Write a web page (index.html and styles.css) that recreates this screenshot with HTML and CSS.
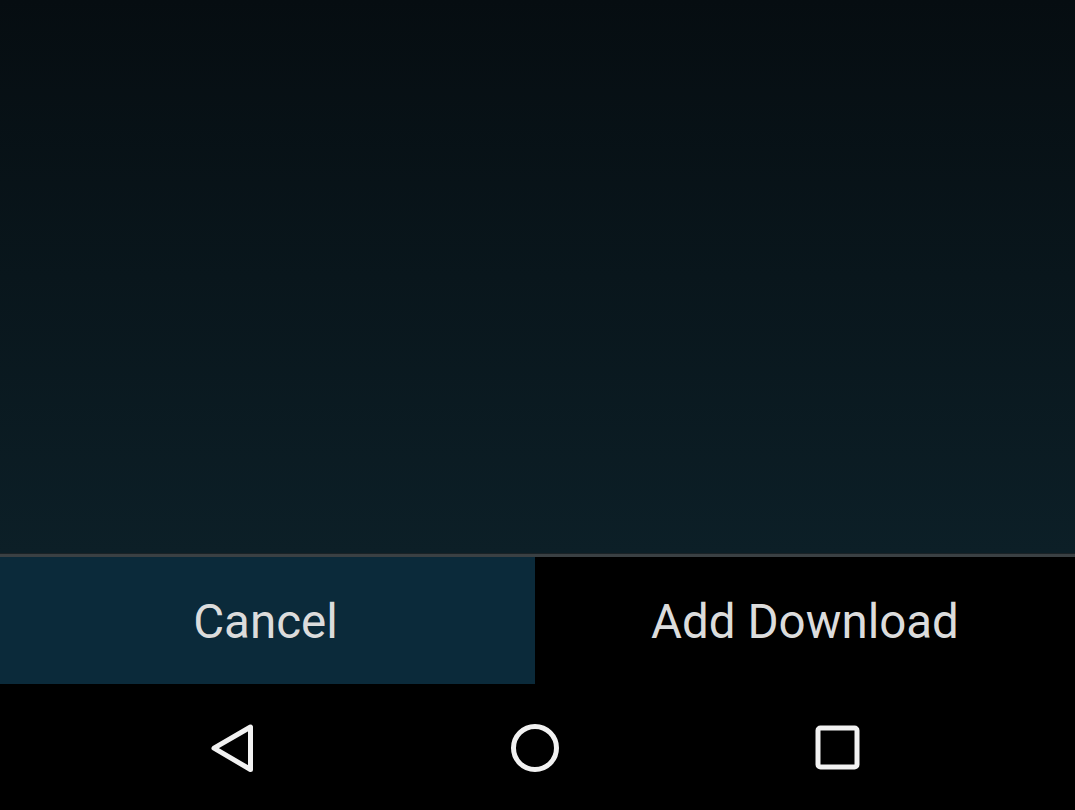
FILE: index.html
```html
<!DOCTYPE html>
<html>
<head>
<meta charset="utf-8">
<link rel="stylesheet" href="styles.css">
</head>
<body>
<div class="screen">
  <div class="content"></div>
  <div class="divider"></div>
  <div class="actions">
    <div class="btn cancel">Cancel</div>
    <div class="btn add">Add Download</div>
  </div>
  <div class="navbar">
    <div class="nav-item">
      <svg width="60" height="60" viewBox="0 0 60 60"><path d="M48.5 9 L48.5 51.5 L12 30.2 Z" fill="none" stroke="#f2f2f2" stroke-width="5" stroke-linejoin="round"/></svg>
    </div>
    <div class="nav-item">
      <svg width="60" height="60" viewBox="0 0 60 60"><circle cx="30" cy="30" r="21.5" fill="none" stroke="#f2f2f2" stroke-width="5"/></svg>
    </div>
    <div class="nav-item">
      <svg width="60" height="60" viewBox="0 0 60 60"><rect x="10" y="10" width="39" height="39" rx="2.5" fill="none" stroke="#f2f2f2" stroke-width="5"/></svg>
    </div>
  </div>
</div>
</body>
</html>
```

FILE: styles.css
```css
html, body {
  margin: 0;
  padding: 0;
  background: #000;
}
.screen {
  width: 1075px;
  height: 810px;
  display: flex;
  flex-direction: column;
  font-family: Roboto, "Noto Sans", sans-serif;
}
.content {
  height: 553px;
  background: linear-gradient(to bottom, #060d11 0%, #09161c 50%, #0c1f27 100%);
}
.divider {
  height: 3px;
  background: #3a4043;
  border-top: 1px solid #1a2226;
}
.actions {
  height: 127px;
  display: flex;
}
.btn {
  display: flex;
  align-items: center;
  justify-content: center;
  color: #dcdcdc;
  font-size: 47.5px;
  padding-top: 2px;
}
.cancel {
  width: 535px;
  box-sizing: border-box;
  padding-right: 4px;
  background: #0b2a3a;
}
.add {
  flex: 1;
  background: #000;
}
.navbar {
  flex: 1;
  background: #000;
  display: flex;
  justify-content: center;
  align-items: center;
  gap: 243px;
  padding-top: 2px;
  padding-right: 5px;
}
.nav-item {
  width: 60px;
  height: 60px;
  display: flex;
}
```
